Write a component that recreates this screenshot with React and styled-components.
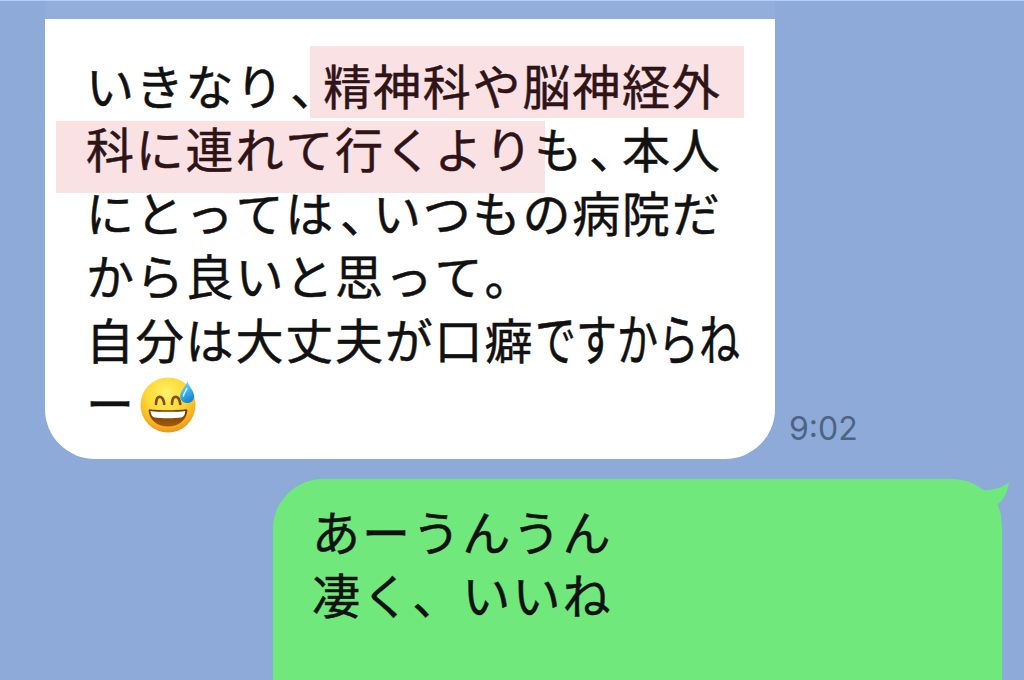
import React from "react";
import styled, { createGlobalStyle } from "styled-components";

function App() {
  return (
    <>
      <GlobalStyle />
      <Screen>
        <TopStrip />
        <ReceivedRow>
          <ReceivedBubble>
            <Line>
              いきなり<Comma>、</Comma>精神科や脳神経外
            </Line>
            <Line>
              科に連れて行くよりも<Comma>、</Comma>本人
            </Line>
            <Line>
              にとっては<Comma>、</Comma>いつもの病院だ
            </Line>
            <Line>から良いと思って。</Line>
            <Line>
              自分は大丈夫が口癖<Condensed>ですからね</Condensed>
            </Line>
            <Line>
              ー<SweatSmile />
            </Line>
            <Marker $left={265} $top={27} $width={434} />
            <Marker $left={11} $top={102} $width={488.5} />
          </ReceivedBubble>
          <Time>9:02</Time>
        </ReceivedRow>
        <SentRow>
          <SentBubble>
            <Line $pitch={50.1}>あーうんうん</Line>
            <Line $pitch={50.1}>凄く、いいね</Line>
            <Tail />
          </SentBubble>
        </SentRow>
      </Screen>
    </>
  );
}

export default App;

function SweatSmile() {
  return (
    <Emoji viewBox="0 0 56 56">
      <defs>
        <radialGradient id="face" cx="0.46" cy="0.3" r="0.72">
          <stop offset="0" stopColor="#fff36b" />
          <stop offset="0.5" stopColor="#fdd835" />
          <stop offset="0.8" stopColor="#f8b325" />
          <stop offset="1" stopColor="#ea8f17" />
        </radialGradient>
        <linearGradient id="mouth" x1="0" y1="0" x2="0" y2="1">
          <stop offset="0" stopColor="#6b3503" />
          <stop offset="1" stopColor="#a65b08" />
        </linearGradient>
        <linearGradient id="drop" x1="0" y1="0" x2="0.4" y2="1">
          <stop offset="0" stopColor="#9be0fa" />
          <stop offset="0.55" stopColor="#3fb4ee" />
          <stop offset="1" stopColor="#1787d3" />
        </linearGradient>
      </defs>
      <circle cx="28" cy="28" r="27.5" fill="url(#face)" />
      <path
        d="M16 27c.2-9.500 6.900-9.500 8.300 0M32 27c.2-9.500 6.900-9.500 8.300 0"
        fill="none"
        stroke="#8a4b06"
        strokeWidth="2.7"
        strokeLinecap="round"
      />
      <path
        d="M10 32.300c6 1.300 30 1.300 36 0 1.200 0 1.600.9 1.300 2.300C46 44 38 49.500 28 49.500S10 44 8.700 34.600c-.3-1.400 0-2.300 1.300-2.300z"
        fill="url(#mouth)"
      />
      <path
        d="M10.500 33.900c8 1.200 27 1.200 34.800 0-.2 3.800-1.600 6-4 6.500-7 1.100-20 1.100-26.800 0-2.400-.5-3.700-2.700-4-6.500z"
        fill="#fff"
      />
      <path
        d="M47.300 4c1 4.700 6.900 10 6.900 15.200 0 3.900-3 6.800-6.900 6.800s-7.200-2.900-7.200-6.800C40.100 14 46.300 8.700 47.300 4z"
        fill="url(#drop)"
      />
      <path
        d="M43.400 19c.5-3 2.500-5 3.500-7.500"
        fill="none"
        stroke="#d4f4ff"
        strokeWidth="1.5"
        strokeLinecap="round"
      />
    </Emoji>
  );
}

function Tail() {
  return (
    <TailShape viewBox="0 0 40 40">
      <path d="M0 6C4 7.500 8 9.500 11.500 11.200 20 11.200 29 8.500 36 3.500 34.500 13 31 20 24.500 26 26.500 30 28 35 28.500 40H0z" />
    </TailShape>
  );
}

const GlobalStyle = createGlobalStyle`
  body {
    margin: 0;
    overflow: hidden;
    background: #8eaad9;
  }
`;

const Screen = styled.div`
  height: 680px;
  overflow: hidden;
  display: flex;
  flex-direction: column;
  background: #8eaad9;
  font-family: "Noto Sans CJK JP", sans-serif;
  color: #111;
`;

const TopStrip = styled.div`
  height: 18px;
  flex: none;
  margin: 0 249px 0 45px;
  background: #93aedb;
  border-top: 1px solid #b4cdf5;
  box-shadow: -45px -18px 0 #b4cdf5, 249px -18px 0 #b4cdf5;
`;

const ReceivedRow = styled.div`
  flex: none;
  display: flex;
  align-items: flex-end;
  padding-left: 45px;
`;

const ReceivedBubble = styled.div`
  position: relative;
  box-sizing: border-box;
  width: 730px;
  height: 440px;
  padding: 34px 0 0 41px;
  border-radius: 0 0 50px 50px;
  background: #fff;
`;

const Line = styled.div`
  display: flex;
  height: 63.4px;
  line-height: 63.4px;
  font-size: 48px;
  font-kerning: none;
  letter-spacing: ${(props) => (props.$pitch || 49.8) - 48}px;
  white-space: nowrap;
  -webkit-text-stroke: 0.5px currentColor;
`;

const Comma = styled.span`
  width: 33px;
  padding-left: 5px;
  font-feature-settings: "halt";
`;

const Condensed = styled.span`
  width: 206px;
  margin: -2px 0 0 1px;
  font-size: 55px;
  letter-spacing: 0;
  transform: scaleX(0.745);
  transform-origin: 0 50%;
`;

const Marker = styled.div`
  position: absolute;
  left: ${(props) => props.$left}px;
  top: ${(props) => props.$top}px;
  width: ${(props) => props.$width}px;
  height: 72px;
  background: rgba(220, 42, 62, 0.14);
`;

const Emoji = styled.svg`
  width: 56px;
  height: 56px;
  margin: 7px 0 0 4px;
`;

const Time = styled.span`
  margin: 0 0 10px 14px;
  font-family: Inter, sans-serif;
  font-size: 32px;
  line-height: 40px;
  color: #4e6384;
`;

const SentRow = styled.div`
  flex: 1;
  display: flex;
  justify-content: flex-end;
  padding: 20px 22px 0 0;
`;

const SentBubble = styled.div`
  position: relative;
  box-sizing: border-box;
  width: 729px;
  height: 240px;
  padding: 20px 0 0 39px;
  border-radius: 50px 50px 0 0;
  background: #70e87c;
`;

const TailShape = styled.svg`
  position: absolute;
  top: 0;
  right: -11px;
  width: 40px;
  height: 40px;
  fill: #70e87c;
`;
